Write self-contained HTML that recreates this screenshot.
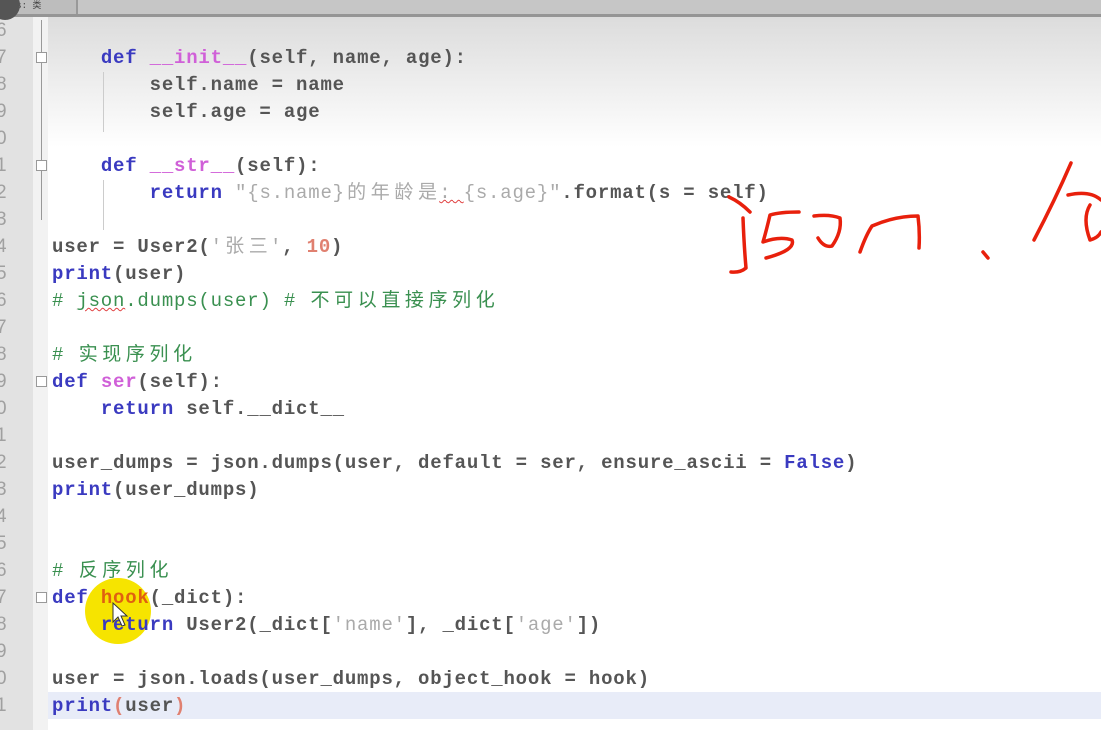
<!DOCTYPE html>
<html><head><meta charset="utf-8"><style>
*{margin:0;padding:0}
body{width:1101px;height:730px;overflow:hidden;background:#fff;position:relative;font-family:"Liberation Mono","Noto Sans CJK SC",monospace;}
#top{position:absolute;left:0;top:0;width:1101px;height:14px;background:#c6c6c6;border-bottom:3px solid #959595}
#tab{position:absolute;left:0;top:0;width:76px;height:14px;background:#bdbdbd;border-right:2px solid #999;font-size:9px;color:#444;line-height:12px}
#shade{position:absolute;left:0;top:17px;width:1101px;height:130px;background:linear-gradient(#dcdcdc,#fff)}
#gut{position:absolute;left:0;top:17px;width:33px;height:713px;background:#e2e2e2}
#fold{position:absolute;left:33px;top:17px;width:15px;height:713px;background:#f2f2f2}
.ln{position:absolute;left:-4px;width:20px;font-size:19px;color:#a0a0a0;line-height:27px;font-family:"Liberation Sans",sans-serif}
.l{position:absolute;left:52px;height:27px;line-height:28px;font-size:19px;letter-spacing:0.8px;font-weight:bold;color:#555;white-space:pre}
.k{color:#3a3ac0}.m{color:#d060d8}.s{color:#aaa;font-weight:normal}.n{color:#e08070}.c{color:#3a9050;font-weight:normal}.h{color:#e06010}
.z{display:inline-block;width:23.6px;text-align:center;letter-spacing:0}
.u{text-decoration:underline wavy #e04040;text-decoration-thickness:1px}
#cur{position:absolute;left:48px;top:692px;width:1053px;height:27px;background:#e8ecf8}
.fb{position:absolute;left:36px;width:9px;height:9px;border:1px solid #999;background:#fff}
.vl{position:absolute;width:1px;background:#ccc}
</style></head><body>
<div id="shade"></div>
<div id="gut"></div><div id="fold"></div>
<div id="cur"></div>
<div id="top"></div><div id="tab">lars: 类</div>
<div style="position:absolute;left:-10px;top:-10px;width:30px;height:30px;border-radius:50%;background:#555"></div>
<div class="vl" style="left:41px;top:20px;height:200px;background:#999"></div>
<div class="vl" style="left:103px;top:72px;height:60px"></div>
<div class="vl" style="left:103px;top:180px;height:50px"></div>
<div class="fb" style="top:52px"></div><div class="fb" style="top:160px"></div><div class="fb" style="top:376px"></div><div class="fb" style="top:592px"></div>

<div class="ln" style="top:17px">6</div><div class="ln" style="top:44px">7</div><div class="ln" style="top:71px">8</div><div class="ln" style="top:98px">9</div><div class="ln" style="top:125px">0</div><div class="ln" style="top:152px">1</div><div class="ln" style="top:179px">2</div><div class="ln" style="top:206px">3</div><div class="ln" style="top:233px">4</div><div class="ln" style="top:260px">5</div><div class="ln" style="top:287px">6</div><div class="ln" style="top:314px">7</div><div class="ln" style="top:341px">8</div><div class="ln" style="top:368px">9</div><div class="ln" style="top:395px">0</div><div class="ln" style="top:422px">1</div><div class="ln" style="top:449px">2</div><div class="ln" style="top:476px">3</div><div class="ln" style="top:503px">4</div><div class="ln" style="top:530px">5</div><div class="ln" style="top:557px">6</div><div class="ln" style="top:584px">7</div><div class="ln" style="top:611px">8</div><div class="ln" style="top:638px">9</div><div class="ln" style="top:665px">0</div><div class="ln" style="top:692px">1</div>

<div class="l" style="top:44px">    <span class="k">def</span> <span class="m">__init__</span>(self, name, age):</div>
<div class="l" style="top:71px">        self.name = name</div>
<div class="l" style="top:98px">        self.age = age</div>
<div class="l" style="top:152px">    <span class="k">def</span> <span class="m">__str__</span>(self):</div>
<div class="l" style="top:179px">        <span class="k">return</span> <span class="s">"{s.name}<span class="u"><span class="z">的</span><span class="z">年</span><span class="z">龄</span><span class="z">是</span>: </span>{s.age}"</span>.format(s = self)</div>
<div class="l" style="top:233px">user = User2(<span class="s">'<span class="z">张</span><span class="z">三</span>'</span>, <span class="n">10</span>)</div>
<div class="l" style="top:260px"><span class="k">print</span>(user)</div>
<div class="l" style="top:287px"><span class="c"># <span class="u">json</span>.dumps(user) # <span class="u"><span class="z">不</span><span class="z">可</span><span class="z">以</span><span class="z">直</span><span class="z">接</span><span class="z">序</span><span class="z">列</span><span class="z">化</span></span></span></div>
<div class="l" style="top:341px"><span class="c"># <span class="u"><span class="z">实</span><span class="z">现</span><span class="z">序</span><span class="z">列</span><span class="z">化</span></span></span></div>
<div class="l" style="top:368px"><span class="k">def</span> <span class="m">ser</span>(self):</div>
<div class="l" style="top:395px">    <span class="k">return</span> self.__dict__</div>
<div class="l" style="top:449px">user_dumps = json.dumps(user, default = ser, ensure_ascii = <span class="k">False</span>)</div>
<div class="l" style="top:476px"><span class="k">print</span>(user_dumps)</div>
<div class="l" style="top:557px"><span class="c"># <span class="u"><span class="z">反</span><span class="z">序</span><span class="z">列</span><span class="z">化</span></span></span></div>
<div style="position:absolute;left:85px;top:578px;width:66px;height:66px;border-radius:50%;background:#f6e400"></div>
<div class="l" style="top:584px"><span class="k">def</span> <span class="h">hook</span>(_dict):</div>
<div class="l" style="top:611px">    <span class="k">return</span> User2(_dict[<span class="s">'name'</span>], _dict[<span class="s">'age'</span>])</div>
<div class="l" style="top:665px">user = json.loads(user_dumps, object_hook = hook)</div>
<div class="l" style="top:692px"><span class="k">print</span><span class="n">(</span>user<span class="n">)</span></div>
<svg style="position:absolute;left:110px;top:600px" width="20" height="30"><path d="M3 3 L3 22 L8 17 L12 26 L15 25 L11 16 L17 16 Z" fill="#fff" stroke="#333" stroke-width="1"/></svg>

<svg style="position:absolute;left:0;top:0" width="1101" height="730" fill="none" stroke="#e8200c" stroke-width="3.5" stroke-linecap="round" stroke-linejoin="round">
<path d="M729 197 Q740 202 750 212"/>
<path d="M743 218 Q744 245 746 268 Q740 273 731 272"/>
<path d="M799 212 Q780 212 770 215 Q766 232 763 242 Q780 236 792 240 Q796 250 766 258"/>
<path d="M814 216 Q830 214 840 218 Q842 232 832 246 Q824 248 818 238"/>
<path d="M860 252 Q866 235 872 226 Q895 216 918 216 Q920 232 919 248"/>
<path d="M983 252 L988 258"/>
<path d="M1071 163 Q1055 200 1034 240"/>
<path d="M1068 195 Q1090 190 1101 200 M1090 205 Q1082 218 1090 240 Q1098 238 1101 232"/>
</svg>
</body></html>
